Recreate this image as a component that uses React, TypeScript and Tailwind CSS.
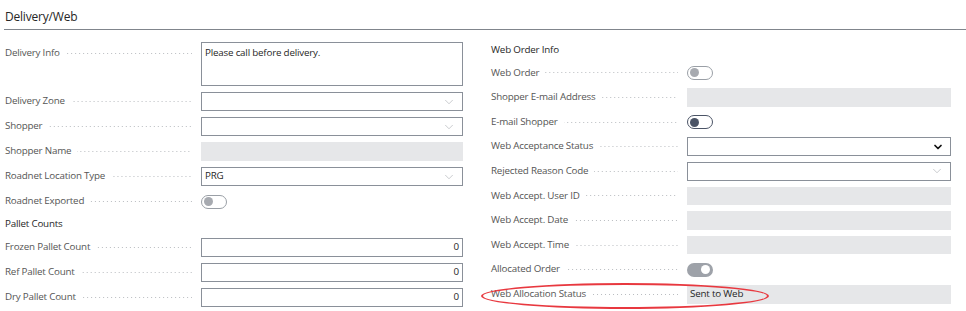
import React from 'react';
import { ChevronDown } from 'lucide-react';

type Field =
  | { kind: 'text'; value?: string; right?: boolean }
  | { kind: 'readonly'; value?: string }
  | { kind: 'select'; value?: string; bold?: boolean }
  | { kind: 'toggle'; state: 'off' | 'offDark' | 'on' };

interface RowProps {
  label: string;
  field: Field;
  rowClass: string;
}

const font = { fontFamily: '"Open Sans", "Noto Sans", sans-serif' };

function Toggle({ state }: { state: 'off' | 'offDark' | 'on' }) {
  if (state === 'on') {
    return (
      <div className="flex h-[14px] w-[26px] items-center justify-end rounded-full bg-[#9ea2a9] pr-[3px]">
        <div className="h-[9px] w-[9px] rounded-full bg-white" />
      </div>
    );
  }
  return (
    <div
      className={
        'flex h-[14px] w-[26px] items-center rounded-full border pl-[2px] ' +
        (state === 'offDark' ? 'border-[#4b5466]' : 'border-[#9a9fa6]')
      }
    >
      <div
        className={
          'h-[9px] w-[9px] rounded-full ' +
          (state === 'offDark' ? 'bg-[#4b5466]' : 'bg-[#a7aab0]')
        }
      />
    </div>
  );
}

function FieldBox({ field, rowClass }: { field: Field; rowClass: string }) {
  if (field.kind === 'toggle') {
    return (
      <div className={'flex items-center ' + rowClass}>
        <Toggle state={field.state} />
      </div>
    );
  }
  if (field.kind === 'readonly') {
    return (
      <div className={'flex items-center bg-[#e6e7e9] px-[3px] text-[9.8px] tracking-[-0.2px] text-[#1f1f1f] ' + rowClass}>
        {field.value}
      </div>
    );
  }
  if (field.kind === 'select') {
    return (
      <div className={'flex items-center border border-[#8a9099] bg-white pl-[3px] pr-[6px] text-[9.8px] tracking-[-0.2px] text-[#1f1f1f] ' + rowClass}>
        <span className="flex-1">{field.value}</span>
        {field.bold ? (
          <ChevronDown size={12} strokeWidth={3.5} color="#111" />
        ) : (
          <ChevronDown size={14} strokeWidth={1} color="#a3a7ad" />
        )}
      </div>
    );
  }
  return (
    <div
      className={
        'flex items-center border border-[#8a9099] bg-white px-[3px] text-[9.8px] text-[#1f1f1f] ' +
        (field.right ? 'justify-end ' : '') +
        rowClass
      }
    >
      {field.value}
    </div>
  );
}

function Leader() {
  return (
    <div className="ml-[6px] h-[2px] flex-1 bg-[linear-gradient(to_right,#b9bcc0_1px,transparent_1px)] bg-[length:4px_1px] bg-repeat-x bg-center" />
  );
}

function Row({ label, field, rowClass }: RowProps) {
  return (
    <div className="flex items-center">
      <div className="flex w-[196px] items-center pr-[9px]">
        <span className="whitespace-nowrap text-[9.8px] tracking-[-0.2px] text-[#555]">{label}</span>
        <Leader />
      </div>
      <div className="flex-1">
        <FieldBox field={field} rowClass={rowClass} />
      </div>
    </div>
  );
}

export default function App() {
  return (
    <div className="relative h-[311px] w-[966px] overflow-hidden bg-white" style={font}>
      <div className="ml-[4px] border-b border-[#80858c] pb-[4px] pl-[1px] pt-[9px] text-[12px] leading-[16px] tracking-[-0.2px] text-[#262626]">
        Delivery/Web
      </div>

      <div className="flex pl-[5px] pt-[12px]">
        {/* left column */}
        <div className="flex w-[458px] flex-col gap-[6px]">
          <div className="flex items-start">
            <div className="flex w-[196px] items-center pr-[9px] pt-[4px]">
              <span className="whitespace-nowrap text-[9.8px] tracking-[-0.2px] text-[#555]">Delivery Info</span>
              <Leader />
            </div>
            <div className="h-[44px] flex-1 border border-[#8a9099] px-[3px] pt-[3px] text-[9.8px] leading-[14px] tracking-[-0.2px] text-[#1f1f1f]">
              Please call before delivery.
            </div>
          </div>
          <Row label="Delivery Zone" field={{ kind: 'select' }} rowClass="h-[19px]" />
          <Row label="Shopper" field={{ kind: 'select' }} rowClass="h-[19px]" />
          <Row label="Shopper Name" field={{ kind: 'readonly' }} rowClass="h-[19px]" />
          <Row label="Roadnet Location Type" field={{ kind: 'select', value: 'PRG' }} rowClass="h-[19px]" />
          <Row label="Roadnet Exported" field={{ kind: 'toggle', state: 'off' }} rowClass="h-[19px]" />
          <div className="flex h-[15px] items-center text-[9.8px] tracking-[-0.2px] text-[#262626]">Pallet Counts</div>
          <Row label="Frozen Pallet Count" field={{ kind: 'text', value: '0', right: true }} rowClass="h-[19px]" />
          <Row label="Ref Pallet Count" field={{ kind: 'text', value: '0', right: true }} rowClass="h-[19px]" />
          <Row label="Dry Pallet Count" field={{ kind: 'text', value: '0', right: true }} rowClass="h-[19px]" />
        </div>

        {/* right column */}
        <div className="ml-[28px] flex w-[460px] flex-col gap-[6px]">
          <div className="flex h-[15.6px] items-end text-[9.8px] tracking-[-0.2px] text-[#262626]">Web Order Info</div>
          <Row label="Web Order" field={{ kind: 'toggle', state: 'off' }} rowClass="h-[18.6px]" />
          <Row label="Shopper E-mail Address" field={{ kind: 'readonly' }} rowClass="h-[18.6px]" />
          <Row label="E-mail Shopper" field={{ kind: 'toggle', state: 'offDark' }} rowClass="h-[18.6px]" />
          <Row label="Web Acceptance Status" field={{ kind: 'select', bold: true }} rowClass="h-[18.6px]" />
          <Row label="Rejected Reason Code" field={{ kind: 'select' }} rowClass="h-[18.6px]" />
          <Row label="Web Accept. User ID" field={{ kind: 'readonly' }} rowClass="h-[18.6px]" />
          <Row label="Web Accept. Date" field={{ kind: 'readonly' }} rowClass="h-[18.6px]" />
          <Row label="Web Accept. Time" field={{ kind: 'readonly' }} rowClass="h-[18.6px]" />
          <Row label="Allocated Order" field={{ kind: 'toggle', state: 'on' }} rowClass="h-[18.6px]" />
          <Row label="Web Allocation Status" field={{ kind: 'readonly', value: 'Sent to Web' }} rowClass="h-[18.6px]" />
        </div>
      </div>

      {/* red annotation */}
      <div className="absolute left-[481px] top-[283px] h-[26px] w-[288px] rounded-[50%] border-[2.5px] border-[#e8383f]" />
    </div>
  );
}
